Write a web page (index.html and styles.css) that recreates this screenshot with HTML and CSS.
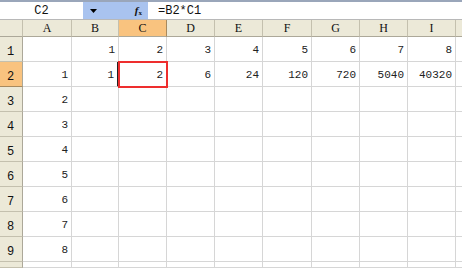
FILE: index.html
```html
<!DOCTYPE html>
<html>
<head>
<meta charset="utf-8">
<link rel="stylesheet" href="styles.css">
</head>
<body>
<div class="app">
  <div class="topband"></div>
  <div class="fbar">
    <div class="namebox">C2</div>
    <div class="fbtns">
      <span class="drop"><svg width="7" height="4" viewBox="0 0 7 4"><path d="M0 0h7L3.5 4z" fill="#000"/></svg></span>
      <span class="fx"><i>f</i><sub>x</sub></span>
    </div>
    <div class="formula">=B2*C1</div>
  </div>
  <div class="grid">
    <div class="ch corner"></div><div class="ch">A</div><div class="ch">B</div><div class="ch sel">C</div><div class="ch">D</div><div class="ch">E</div><div class="ch">F</div><div class="ch">G</div><div class="ch">H</div><div class="ch">I</div><div class="ch"></div>

    <div class="rh">1</div><div class="c"></div><div class="c">1</div><div class="c">2</div><div class="c">3</div><div class="c">4</div><div class="c">5</div><div class="c">6</div><div class="c">7</div><div class="c">8</div><div class="c"></div>

    <div class="rh sel">2</div><div class="c">1</div><div class="c bsel">1</div><div class="c active">2</div><div class="c">6</div><div class="c">24</div><div class="c">120</div><div class="c">720</div><div class="c">5040</div><div class="c">40320</div><div class="c"></div>

    <div class="rh">3</div><div class="c">2</div><div class="c"></div><div class="c"></div><div class="c"></div><div class="c"></div><div class="c"></div><div class="c"></div><div class="c"></div><div class="c"></div><div class="c"></div>
    <div class="rh">4</div><div class="c">3</div><div class="c"></div><div class="c"></div><div class="c"></div><div class="c"></div><div class="c"></div><div class="c"></div><div class="c"></div><div class="c"></div><div class="c"></div>
    <div class="rh">5</div><div class="c">4</div><div class="c"></div><div class="c"></div><div class="c"></div><div class="c"></div><div class="c"></div><div class="c"></div><div class="c"></div><div class="c"></div><div class="c"></div>
    <div class="rh">6</div><div class="c">5</div><div class="c"></div><div class="c"></div><div class="c"></div><div class="c"></div><div class="c"></div><div class="c"></div><div class="c"></div><div class="c"></div><div class="c"></div>
    <div class="rh">7</div><div class="c">6</div><div class="c"></div><div class="c"></div><div class="c"></div><div class="c"></div><div class="c"></div><div class="c"></div><div class="c"></div><div class="c"></div><div class="c"></div>
    <div class="rh">8</div><div class="c">7</div><div class="c"></div><div class="c"></div><div class="c"></div><div class="c"></div><div class="c"></div><div class="c"></div><div class="c"></div><div class="c"></div><div class="c"></div>
    <div class="rh">9</div><div class="c">8</div><div class="c"></div><div class="c"></div><div class="c"></div><div class="c"></div><div class="c"></div><div class="c"></div><div class="c"></div><div class="c"></div><div class="c"></div>
    <div class="rh"></div><div class="c"></div><div class="c"></div><div class="c"></div><div class="c"></div><div class="c"></div><div class="c"></div><div class="c"></div><div class="c"></div><div class="c"></div><div class="c"></div>
  </div>
</div>
</body>
</html>
```
FILE: styles.css
```css
* { box-sizing: border-box; }
html, body { margin: 0; padding: 0; background: #fff; }
body { width: 462px; height: 268px; overflow: hidden; font-family: "Liberation Mono", "DejaVu Sans Mono", monospace; font-size: 11px; color: #111; }
.app { display: flex; flex-direction: column; width: 462px; }
.topband { height: 2px; background: #9aa6ba; }
.fbar { display: flex; height: 18px; border-bottom: 1px solid #b8b8b8; background: #fff; }
.namebox { width: 83px; display: flex; align-items: center; justify-content: center; font-size: 12px; padding-top: 1px; color: #111; }
.fbtns { width: 65px; background: #a9c3ef; display: flex; align-items: center; justify-content: space-between; padding: 0 6px 0 7px; }
.drop { display: flex; align-items: center; padding-top: 1px; }
.fx { font-family: "Liberation Serif", serif; font-size: 11px; font-weight: bold; color: #111; line-height: 1; }
.fx sub { font-size: 7px; vertical-align: -1px; }
.formula { flex: 1; display: flex; align-items: center; padding-left: 10px; font-size: 12px; padding-top: 1px; }
.grid { display: grid; grid-template-columns: 23px 49px 47px 48px 48px 48px 49px 48px 48px 48px 20px; grid-template-rows: 17px repeat(9, 25px) 6px; }
.ch { background: #ece9d8; border-right: 1px solid #c4c0ae; border-bottom: 1px solid #aca899; display: flex; align-items: center; justify-content: center; font-family: "Liberation Serif", serif; font-size: 12px; color: #111; padding-top: 1px; }
.ch.sel { background: #f9c37f; border-right-color: #a88a5e; }
.rh { background: #ece9d8; border-right: 1px solid #aca899; border-bottom: 1px solid #c4c0ae; display: flex; align-items: flex-end; padding: 0 0 2px 7px; font-size: 12px; color: #111; }
.rh.sel { background: #f9c37f; border-bottom-color: #a88a5e; }
.c { border-right: 1px solid #d6d6d6; border-bottom: 1px solid #d6d6d6; display: flex; align-items: center; justify-content: flex-end; padding: 2px 3px 0 0; color: #222; position: relative; }
.c.bsel { border-right: 2px solid #222; }
.c.active { outline: 2px solid #ee2e2e; outline-offset: -1px; z-index: 1; }
```
